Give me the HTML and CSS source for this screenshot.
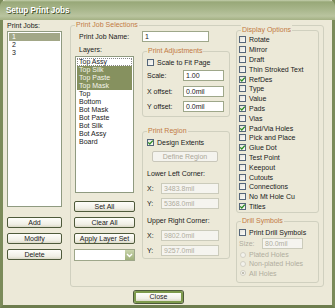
FILE: index.html
```html
<!DOCTYPE html>
<html>
<head>
<meta charset="utf-8">
<link rel="stylesheet" href="styles.css">
</head>
<body>
<div class="window">
  <div class="titlebar"><span class="title">Setup Print Jobs</span></div>
  <div class="main">
    <div class="jobs-col">
      <div class="lbl">Print Jobs:</div>
      <div class="listbox jobs">
        <div class="item sel-inactive">1</div>
        <div class="item">2</div>
        <div class="item">3</div>
      </div>
      <div class="btn-stack">
        <div class="btn">Add</div>
        <div class="btn">Modify</div>
        <div class="btn">Delete</div>
      </div>
    </div>
    <div class="group outer">
      <span class="gtitle">Print Job Selections</span>
      <div class="sel-left">
        <div class="name-row">
          <span class="name-lbl">Print Job Name:</span>
          <div class="input name-input">1</div>
        </div>
        <div class="sel-cols">
          <div class="layers-col">
            <div class="lbl layers-lbl">Layers:</div>
            <div class="listbox layers">
              <div class="item focus">Top Assy</div>
              <div class="item sel">Top Silk</div>
              <div class="item sel">Top Paste</div>
              <div class="item sel">Top Mask</div>
              <div class="item">Top</div>
              <div class="item">Bottom</div>
              <div class="item">Bot Mask</div>
              <div class="item">Bot Paste</div>
              <div class="item">Bot Silk</div>
              <div class="item">Bot Assy</div>
              <div class="item">Board</div>
            </div>
            <div class="btn-stack layer-btns">
              <div class="btn">Set All</div>
              <div class="btn">Clear All</div>
              <div class="btn">Apply Layer Set</div>
              <div class="combo"><div class="combo-field"></div><div class="combo-btn"><svg width="7" height="5" viewBox="0 0 7 5"><path d="M1 1 L3.5 3.5 L6 1" fill="none" stroke="#fff" stroke-width="1.4"/></svg></div></div>
            </div>
          </div>
          <div class="adj-col">
            <div class="group adj">
              <span class="gtitle">Print Adjustments</span>
              <div class="check-row adj-check"><span class="cb"></span><span>Scale to Fit Page</span></div>
              <div class="field-rows">
                <div class="field-row"><span class="flbl">Scale:</span><div class="input adj-input">1.00</div></div>
                <div class="field-row"><span class="flbl">X offset:</span><div class="input adj-input">0.0mil</div></div>
                <div class="field-row"><span class="flbl">Y offset:</span><div class="input adj-input">0.0mil</div></div>
              </div>
            </div>
            <div class="group region">
              <span class="gtitle">Print Region</span>
              <div class="check-row region-check"><span class="cb on"><svg width="7" height="7" viewBox="0 0 7 7"><path d="M1.2 3.4 L2.8 5 L5.8 1.6" fill="none" stroke="#2a8a22" stroke-width="1.3"/></svg></span><span>Design Extents</span></div>
              <div class="btn disabled define">Define Region</div>
              <div class="lbl corner">Lower Left Corner:</div>
              <div class="field-row xy"><span class="xylbl">X:</span><div class="input dis xy-input">3483.8mil</div></div>
              <div class="field-row xy second"><span class="xylbl">Y:</span><div class="input dis xy-input">5368.0mil</div></div>
              <div class="lbl corner">Upper Right Corner:</div>
              <div class="field-row xy"><span class="xylbl">X:</span><div class="input dis xy-input">9802.0mil</div></div>
              <div class="field-row xy second"><span class="xylbl">Y:</span><div class="input dis xy-input">9257.0mil</div></div>
            </div>
          </div>
        </div>
      </div>
      <div class="display-col">
        <div class="group display">
          <span class="gtitle">Display Options</span>
          <div class="opts">
            <div class="check-row"><span class="cb"></span><span>Rotate</span></div>
            <div class="check-row"><span class="cb"></span><span>Mirror</span></div>
            <div class="check-row"><span class="cb"></span><span>Draft</span></div>
            <div class="check-row"><span class="cb"></span><span>Thin Stroked Text</span></div>
            <div class="check-row"><span class="cb on"><svg width="7" height="7" viewBox="0 0 7 7"><path d="M1.2 3.4 L2.8 5 L5.8 1.6" fill="none" stroke="#2a8a22" stroke-width="1.3"/></svg></span><span>RefDes</span></div>
            <div class="check-row"><span class="cb"></span><span>Type</span></div>
            <div class="check-row"><span class="cb"></span><span>Value</span></div>
            <div class="check-row"><span class="cb on"><svg width="7" height="7" viewBox="0 0 7 7"><path d="M1.2 3.4 L2.8 5 L5.8 1.6" fill="none" stroke="#2a8a22" stroke-width="1.3"/></svg></span><span>Pads</span></div>
            <div class="check-row"><span class="cb"></span><span>Vias</span></div>
            <div class="check-row"><span class="cb on"><svg width="7" height="7" viewBox="0 0 7 7"><path d="M1.2 3.4 L2.8 5 L5.8 1.6" fill="none" stroke="#2a8a22" stroke-width="1.3"/></svg></span><span>Pad/Via Holes</span></div>
            <div class="check-row"><span class="cb"></span><span>Pick and Place</span></div>
            <div class="check-row"><span class="cb on"><svg width="7" height="7" viewBox="0 0 7 7"><path d="M1.2 3.4 L2.8 5 L5.8 1.6" fill="none" stroke="#2a8a22" stroke-width="1.3"/></svg></span><span>Glue Dot</span></div>
            <div class="check-row"><span class="cb"></span><span>Test Point</span></div>
            <div class="check-row"><span class="cb"></span><span>Keepout</span></div>
            <div class="check-row"><span class="cb"></span><span>Cutouts</span></div>
            <div class="check-row"><span class="cb"></span><span>Connections</span></div>
            <div class="check-row"><span class="cb"></span><span>No Mt Hole Cu</span></div>
            <div class="check-row"><span class="cb on"><svg width="7" height="7" viewBox="0 0 7 7"><path d="M1.2 3.4 L2.8 5 L5.8 1.6" fill="none" stroke="#2a8a22" stroke-width="1.3"/></svg></span><span>Titles</span></div>
          </div>
        </div>
        <div class="group drill">
          <span class="gtitle">Drill Symbols</span>
          <div class="check-row drill-check"><span class="cb"></span><span>Print Drill Symbols</span></div>
          <div class="field-row size-row"><span class="size-lbl dis-text">Size:</span><div class="input dis size-input">80.0mil</div></div>
          <div class="radios">
            <div class="radio-row dis-text"><span class="rb"></span><span>Plated Holes</span></div>
            <div class="radio-row dis-text"><span class="rb"></span><span>Non-plated Holes</span></div>
            <div class="radio-row dis-text"><span class="rb on"></span><span>All Holes</span></div>
          </div>
        </div>
      </div>
    </div>
  </div>
  <div class="footer"><div class="btn default close">Close</div></div>
</div>
</body>
</html>
```

FILE: styles.css
```css
* { box-sizing: border-box; }
html, body { margin: 0; padding: 0; }
body {
  width: 335px;
  height: 308px;
  overflow: hidden;
  background: #ece9d8;
  font-family: "Liberation Sans", Arial, sans-serif;
  font-size: 7px;
  color: #1a1a1a;
}
.window {
  width: 335px;
  height: 308px;
  background: #ece9d8;
  border-left: 3px solid #7b8b5a;
  border-right: 3px solid #7b8b5a;
  border-bottom: 3px solid #6d7d4e;
  display: flex;
  flex-direction: column;
}
.titlebar {
  height: 20px;
  margin: 0 -3px;
  border-radius: 6px 6px 0 0;
  background: linear-gradient(#c5cfae 0px, #98a878 2px, #a7b58a 9px, #b9c49f 16px, #a3b083 20px);
  padding-left: 6px;
  display: flex;
  align-items: center;
  flex: none;
}
.title {
  color: #fff;
  font-weight: bold;
  font-size: 8.2px;
  letter-spacing: -0.1px;
  text-shadow: 1px 1px 0 #4a5530;
  margin-top: 1px;
}
.main {
  display: flex;
  padding-left: 4px;
  flex: none;
}
.jobs-col {
  width: 55px;
  display: flex;
  flex-direction: column;
}
.lbl {
  height: 10px;
  line-height: 10px;
  white-space: nowrap;
}
.jobs-col .lbl { margin-top: 1px; }
.listbox {
  background: #fff;
  border: 1px solid #8f9a80;
  padding: 1px;
  line-height: 8px;
}
.item {
  height: 8px;
  line-height: 8px;
  padding-left: 2px;
  white-space: nowrap;
}
.jobs { height: 176px; }
.jobs .item { padding-left: 3px; }
.sel-inactive { background: #a2a787; color: #fff; }
.sel { background: #86915f; color: #f4f4ea; }
.focus { outline: 1px dotted #888; outline-offset: -1px; }
.btn-stack {
  display: flex;
  flex-direction: column;
  gap: 5px;
  margin-top: 10px;
}
.btn {
  height: 11px;
  line-height: 9px;
  text-align: center;
  border: 1px solid #4e5a3a;
  border-radius: 2px;
  background: linear-gradient(#fefefa, #f0efe6 70%, #dcdac8);
  white-space: nowrap;
  overflow: hidden;
}
.btn.disabled {
  color: #aca899;
  border-color: #c9c7ba;
  background: #f4f3ee;
}
.btn.default {
  border: 2px solid #7d9a4c;
  box-shadow: 0 0 0 1px #4e5a3a;
  line-height: 8px;
}
.group {
  position: relative;
  border: 1px solid #d0d0bf;
  border-radius: 3px;
}
.gtitle {
  position: absolute;
  top: -6px;
  left: 4px;
  padding: 0 1px;
  background: #ece9d8;
  color: #c27a44;
  line-height: 10px;
  white-space: nowrap;
}
.outer {
  margin-left: 8px;
  margin-top: 5px;
  width: 254px;
  height: 262px;
  display: flex;
}
.sel-left {
  margin-left: 3px;
  margin-top: 5px;
  width: 156px;
  display: flex;
  flex-direction: column;
}
.name-row {
  display: flex;
  height: 11px;
  align-items: center;
}
.name-lbl { width: 68px; padding-left: 5px; white-space: nowrap; }
.input {
  height: 11px;
  line-height: 9px;
  background: #fff;
  border: 1px solid #9ea78a;
  padding-left: 2px;
  white-space: nowrap;
  overflow: hidden;
}
.input.dis {
  background: #f5f4ef;
  border-color: #cbcbbb;
  color: #b0ad9e;
}
.name-input { width: 67px; }
.sel-cols { display: flex; }
.layers-col {
  width: 61px;
  display: flex;
  flex-direction: column;
}
.layers-lbl { margin-top: 3px; padding-left: 5px; }
.layers { margin-top: 1px; margin-left: 1px; width: 59px; height: 137px; }
.layer-btns { margin-top: 8px; }
.combo {
  height: 12px;
  display: flex;
  border: 1px solid #9ea78a;
  background: #fff;
}
.combo-field { flex: 1; }
.combo-btn {
  width: 10px;
  background: linear-gradient(#c8d4ab, #9fb07a);
  border-left: 1px solid #fff;
  display: flex;
  align-items: center;
  justify-content: center;
}
.adj-col {
  margin-left: 7px;
  width: 88px;
  display: flex;
  flex-direction: column;
}
.adj { margin-top: 9px; height: 66px; }
.check-row {
  display: flex;
  align-items: center;
  white-space: nowrap;
}
.cb {
  width: 7px;
  height: 7px;
  border: 1px solid #55667a;
  background: linear-gradient(135deg, #e4e3dc, #fbfbf8);
  flex: none;
  margin-right: 3px;
  position: relative;
  display: flex;
}
.cb svg { position: absolute; left: -1px; top: -1px; }
.adj-check { margin-top: 5px; height: 10px; padding-left: 4px; }
.field-rows { margin-top: 3px; display: flex; flex-direction: column; gap: 4.5px; }
.field-row { display: flex; align-items: center; height: 11px; }
.flbl { width: 40px; padding-left: 4px; white-space: nowrap; }
.adj-input { width: 41px; }
.region { margin-top: 14px; height: 128px; padding-left: 4px; }
.region-check { margin-top: 5px; height: 10px; }
.define { margin-top: 4px; margin-left: 5px; width: 66px; }
.corner { margin-top: 7px; }
.xy { margin-top: 4px; }
.xy.second { margin-top: 4px; }
.xylbl { width: 14px; }
.xy-input { width: 58px; }
.display-col {
  margin-left: 6px;
  width: 83px;
  display: flex;
  flex-direction: column;
}
.display { margin-top: 4px; height: 183px; }
.opts { margin-top: 4px; padding-left: 2px; }
.opts .check-row { height: 9.8px; }
.drill { margin-top: 8px; height: 62px; padding-left: 2px; }
.drill-check { margin-top: 5px; height: 10px; }
.size-row { margin-top: 1px; }
.size-lbl { width: 23px; }
.dis-text { color: #b0ad9e; }
.size-input { width: 41px; }
.radios { margin-top: 1px; }
.radio-row { display: flex; align-items: center; height: 9.3px; white-space: nowrap; }
.rb {
  width: 6px;
  height: 6px;
  border-radius: 50%;
  border: 1px solid #d2d0c4;
  background: #f3f2ec;
  margin: 0 3px 0 1px;
  position: relative;
  flex: none;
}
.rb.on::after {
  content: "";
  position: absolute;
  left: 1px;
  top: 1px;
  width: 2px;
  height: 2px;
  border-radius: 50%;
  background: #b0ad9e;
}
.footer {
  padding-left: 131px;
  margin-top: 4px;
}
.close { width: 49px; height: 12px; }
```
